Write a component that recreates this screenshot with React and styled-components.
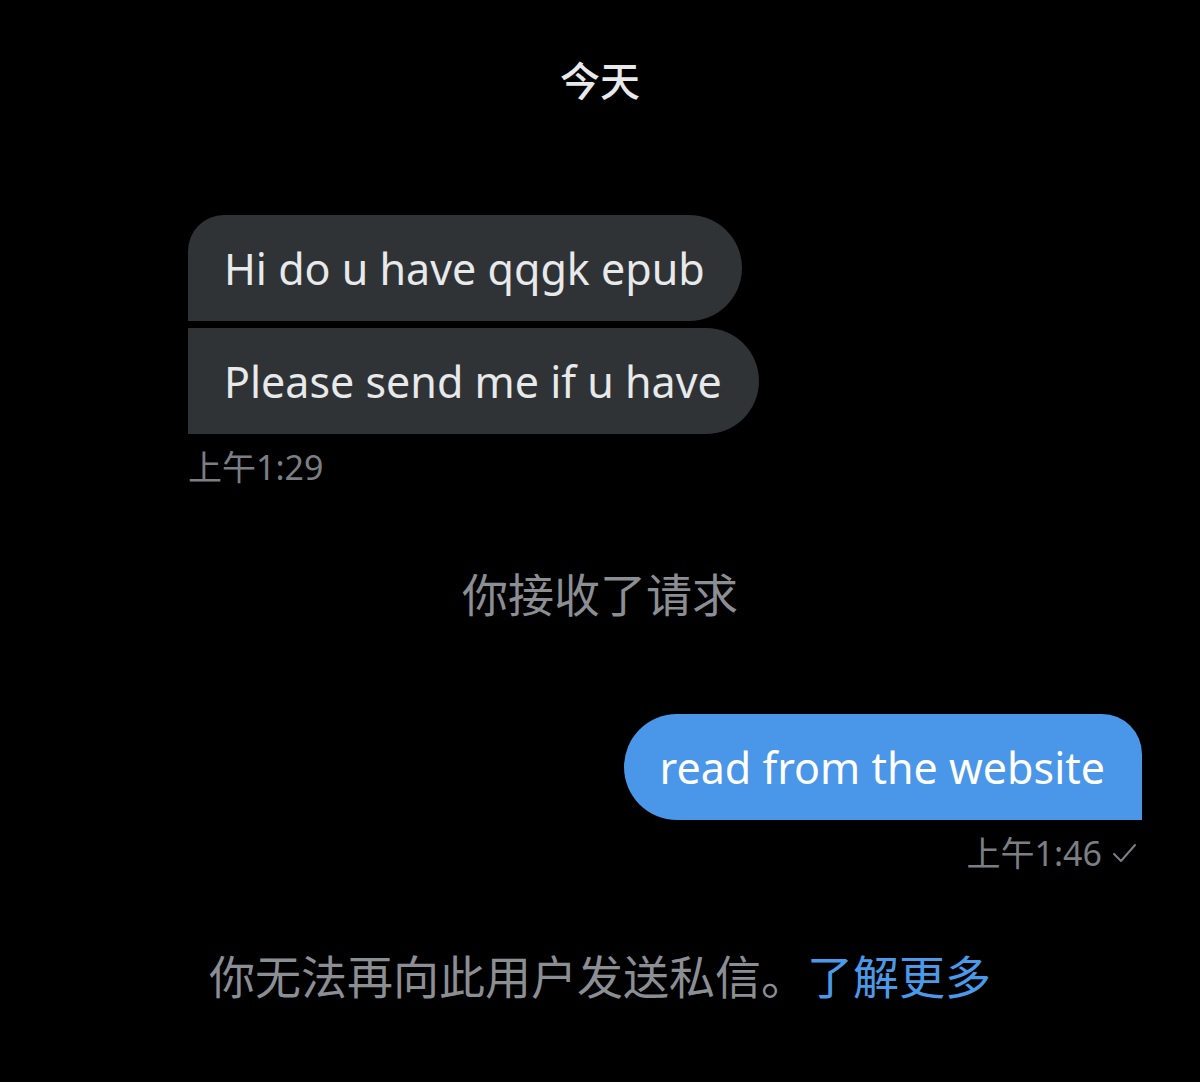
import React from "react";
import styled, { createGlobalStyle } from "styled-components";

const Global = createGlobalStyle`
  html, body { margin: 0; padding: 0; background: #000; }
  body { font-family: "Noto Sans", "Noto Sans CJK SC", sans-serif; }
`;

const Screen = styled.div`
  width: 1200px;
  height: 1082px;
  background: #000;
  display: flex;
  flex-direction: column;
  box-sizing: border-box;
  padding-top: 54px;
`;

const DayLabel = styled.div`
  text-align: center;
  color: #e7e9ea;
  font-size: 40px;
  font-weight: 500;
  line-height: 50px;
  font-family: "Noto Sans CJK SC", sans-serif;
`;

const Group = styled.div`
  display: flex;
  flex-direction: column;
  align-items: ${(p) => (p.$mine ? "flex-end" : "flex-start")};
  gap: 7px;
  padding: ${(p) => (p.$mine ? "0 58px 0 0" : "0 0 0 188px")};
  margin-top: ${(p) => p.$top}px;
`;

const Bubble = styled.div`
  box-sizing: border-box;
  height: 106px;
  display: flex;
  align-items: center;
  padding: 0 37px 0 36px;
  font-family: "Noto Sans", sans-serif;
  font-size: 43px;
  color: ${(p) => (p.$mine ? "#ffffff" : "#e7e9ea")};
  background: ${(p) => (p.$mine ? "#4a96e8" : "#2f3336")};
  border-radius: ${(p) => p.$radius};
  white-space: nowrap;
`;

const Time = styled.div`
  display: flex;
  align-items: center;
  gap: 8px;
  color: #7b7f84;
  font-size: 34px;
  line-height: 40px;
  margin-top: 6px;
  font-family: "Noto Sans", "Noto Sans CJK SC", sans-serif;
  ${(p) => (p.$mine ? "margin-right: 4px;" : "")}
`;

const Notice = styled.div`
  text-align: center;
  color: #8b8e93;
  font-size: 46px;
  line-height: 56px;
  font-family: "Noto Sans CJK SC", sans-serif;
  margin-top: ${(p) => p.$top}px;
`;

const Link = styled.span`
  color: #4a9ae9;
`;

const Check = () => (
  <svg width="28" height="28" viewBox="0 0 28 28" fill="none">
    <path d="M4 15 L11 22 L25 6" stroke="#7b7f84" strokeWidth="2" strokeLinecap="round" strokeLinejoin="round" />
  </svg>
);

export default function App() {
  return (
    <>
      <Global />
      <Screen>
        <DayLabel>今天</DayLabel>
        <Group $top={111}>
          <Bubble $radius="36px 53px 53px 0">Hi do u have qqgk epub</Bubble>
          <Bubble $radius="0 53px 53px 0">Please send me if u have</Bubble>
          <Time>上午1:29</Time>
        </Group>
        <Notice $top={77}>你接收了请求</Notice>
        <Group $mine $top={94}>
          <Bubble $mine $radius="53px 40px 0 53px">read from the website</Bubble>
          <Time $mine>上午1:46<Check /></Time>
        </Group>
        <Notice $top={73}>
          你无法再向此用户发送私信。<Link>了解更多</Link>
        </Notice>
      </Screen>
    </>
  );
}
